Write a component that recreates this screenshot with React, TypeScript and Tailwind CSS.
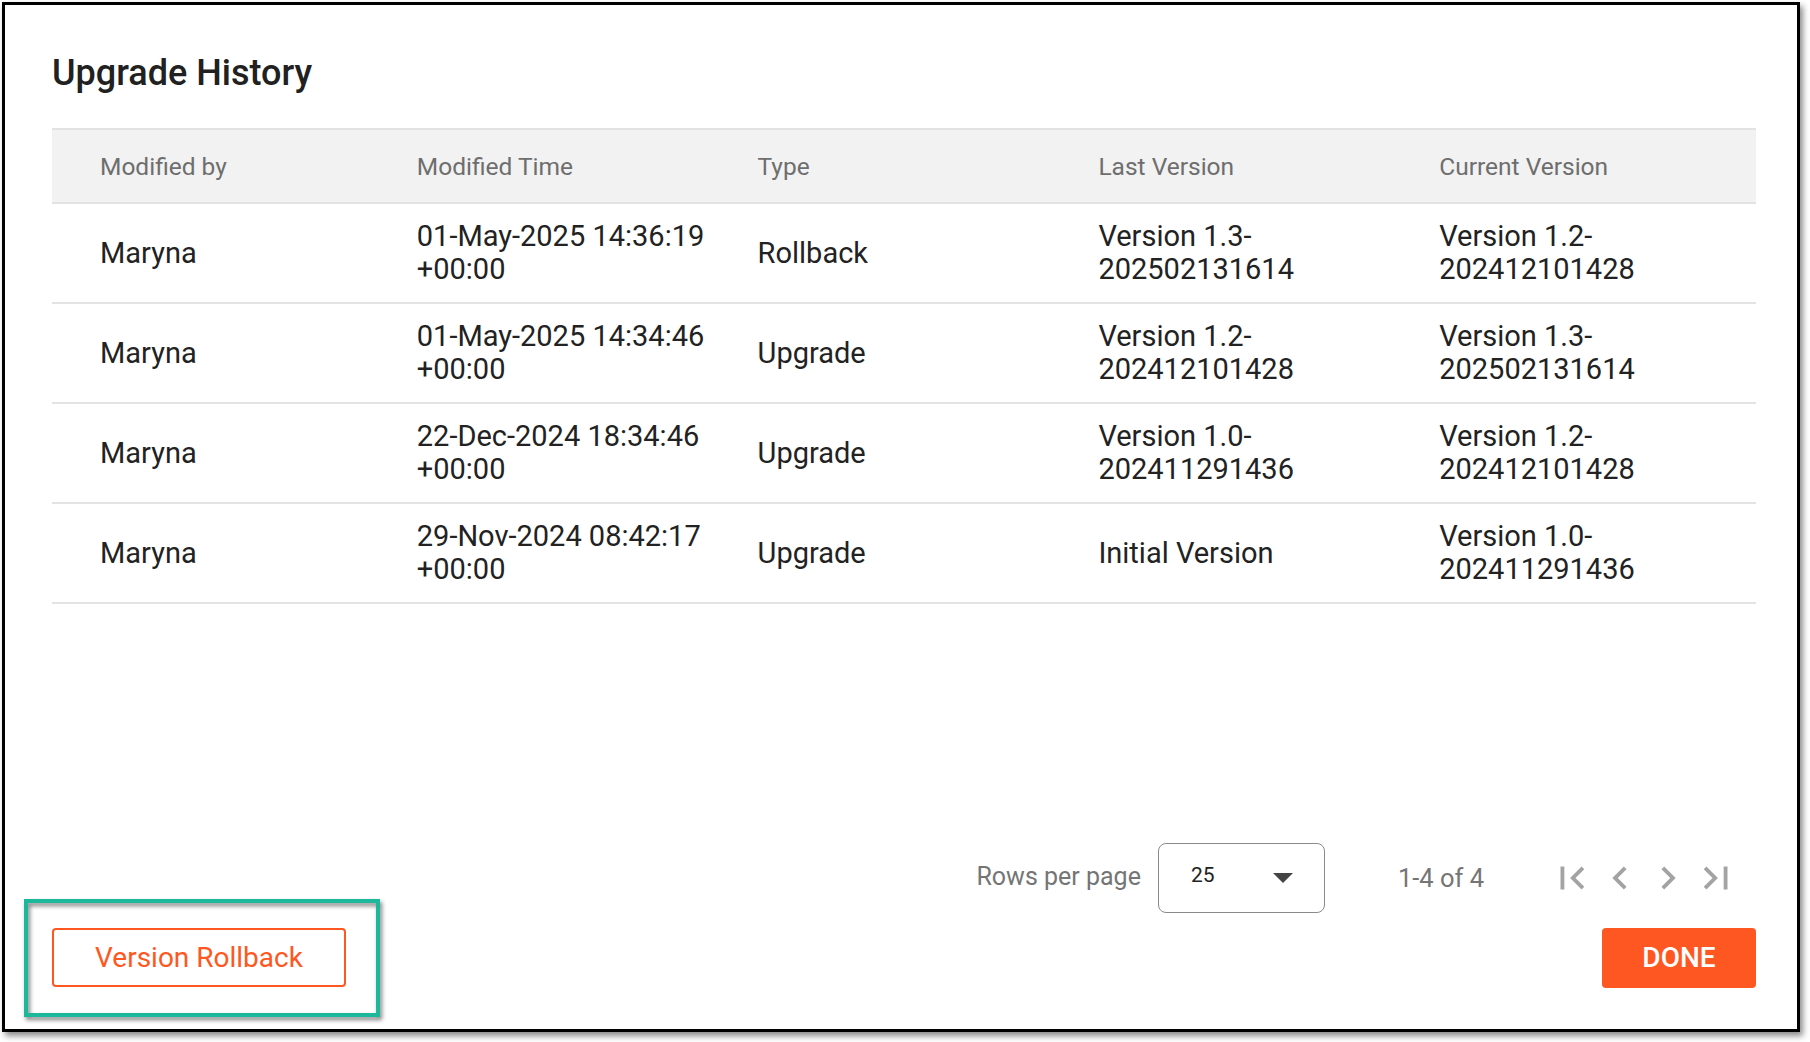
import React from "react";

type Row = {
  by: string;
  time: string;
  type: string;
  last: string;
  current: string;
};

const rows: Row[] = [
  {
    by: "Maryna",
    time: "01-May-2025 14:36:19 +00:00",
    type: "Rollback",
    last: "Version 1.3-202502131614",
    current: "Version 1.2-202412101428",
  },
  {
    by: "Maryna",
    time: "01-May-2025 14:34:46 +00:00",
    type: "Upgrade",
    last: "Version 1.2-202412101428",
    current: "Version 1.3-202502131614",
  },
  {
    by: "Maryna",
    time: "22-Dec-2024 18:34:46 +00:00",
    type: "Upgrade",
    last: "Version 1.0-202411291436",
    current: "Version 1.2-202412101428",
  },
  {
    by: "Maryna",
    time: "29-Nov-2024 08:42:17 +00:00",
    type: "Upgrade",
    last: "Initial Version",
    current: "Version 1.0-202411291436",
  },
];

const headers = ["Modified by", "Modified Time", "Type", "Last Version", "Current Version"];

function PagerIcon({ d }: { d: string }) {
  return (
    <span className="flex h-[48px] w-[48px] items-center justify-center">
      <svg width="46" height="46" viewBox="0 0 24 24" fill="#a3a3a3" aria-hidden="true">
        <path d={d} />
      </svg>
    </span>
  );
}

export default function App() {
  return (
    <div className="relative h-[1042px] w-[1810px] bg-white font-['Roboto',sans-serif]">
      <div className="ml-[2px] mt-[2px] flex h-[1030px] w-[1798px] flex-col border-[3px] border-black bg-white pb-[41px] pl-[47px] pr-[41px] pt-[47px] shadow-[3px_4px_6px_rgba(0,0,0,0.45)]">
        <h1 className="h-[42px] text-[36px] font-medium leading-[42px] text-[#212121]">Upgrade History</h1>

        {/* history table */}
        <div className="mt-[34px] border-t-2 border-[#e3e3e3]">
          <div className="grid h-[74px] grid-cols-5 border-b-2 border-[#e3e3e3] bg-[#f2f2f2] pt-[2px] text-[24.5px] leading-[28px] text-[#6e6e6e]">
            {headers.map((h, i) => (
              <div key={h} className={`flex items-center pr-[24px] ${i === 0 ? "pl-[48px]" : "pl-[24px]"}`}>
                {h}
              </div>
            ))}
          </div>
          {rows.map((r, idx) => (
            <div
              key={idx}
              className="grid h-[100px] grid-cols-5 border-b-2 border-[#e3e3e3] text-[29px] leading-[33px] text-[#222222]"
            >
              <div className="flex items-center pl-[48px] pr-[24px]">{r.by}</div>
              <div className="flex items-center px-[24px]">{r.time}</div>
              <div className="flex items-center px-[24px]">{r.type}</div>
              <div className="flex items-center px-[24px]">{r.last}</div>
              <div className="flex items-center px-[24px]">{r.current}</div>
            </div>
          ))}
        </div>

        <div className="flex-1" />

        {/* pagination */}
        <div className="flex h-[70px] items-center justify-end">
          <span className="mb-[3px] text-[25px] leading-[28px] text-[#757575]">Rows per page</span>
          <div className="ml-[17px] flex h-[70px] w-[167px] items-center justify-between rounded-[8px] border-[1.5px] border-[#8a8a8a] pl-[32px] pr-[31px]">
            <span className="mb-[7px] text-[21px] leading-[24px] text-[#222222]">25</span>
            <svg width="20" height="10" viewBox="0 0 20 10" aria-hidden="true">
              <path d="M0 0h20L10 10z" fill="#444444" />
            </svg>
          </div>
          <span className="ml-[73px] text-[25.5px] leading-[28px] text-[#757575]">1-4 of 4</span>
          <div className="ml-[64px] flex pr-[16px]">
            <PagerIcon d="M18.41 16.59L13.82 12l4.59-4.59L17 6l-6 6 6 6zM6 6h2v12H6z" />
            <PagerIcon d="M15.41 7.41L14 6l-6 6 6 6 1.41-1.41L10.83 12z" />
            <PagerIcon d="M10 6L8.59 7.41 13.17 12l-4.58 4.59L10 18l6-6z" />
            <PagerIcon d="M5.59 7.41L10.18 12l-4.59 4.59L7 18l6-6-6-6zM16 6h2v12h-2z" />
          </div>
        </div>

        {/* actions */}
        <div className="mt-[15px] flex items-start justify-between">
          <button className="flex h-[59px] w-[294px] items-center justify-center rounded-[4px] border-2 border-[#ff5722] text-[28px] leading-[32px] text-[#ff5722]">
            Version Rollback
          </button>
          <button className="flex h-[60px] w-[154px] items-center justify-center rounded-[4px] bg-[#ff5722] text-[28px] font-medium leading-[32px] text-white">
            DONE
          </button>
        </div>
      </div>

      {/* highlight frame around the rollback action */}
      <div className="pointer-events-none absolute left-[24px] top-[897px] h-[118px] w-[356px] border-4 border-[#1bb89b] drop-shadow-[2px_3px_2px_rgba(0,0,0,0.5)]" />
    </div>
  );
}
